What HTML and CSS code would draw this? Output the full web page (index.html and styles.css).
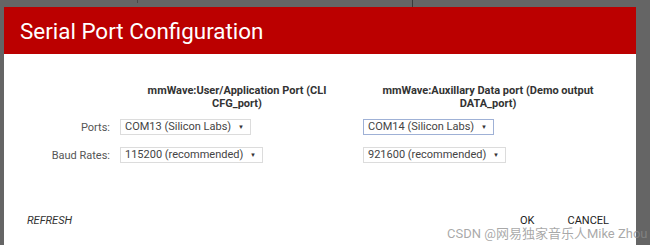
FILE: index.html
```html
<!DOCTYPE html>
<html>
<head>
<meta charset="utf-8">
<link rel="stylesheet" href="styles.css">
</head>
<body>
<div class="topstrip"><span class="mark mark-a"></span><span class="mark mark-b"></span></div>
<div class="dialog">
  <div class="header">Serial Port Configuration</div>
  <div class="grid">
    <div></div>
    <div class="heading h1">mmWave:User/Application Port (CLI CFG_port)</div>
    <div class="heading h2">mmWave:Auxillary Data port (Demo output DATA_port)</div>

    <div class="label">Ports:</div>
    <div class="cell"><span class="select">COM13 (Silicon Labs) <span class="arrow">▼</span></span></div>
    <div class="cell"><span class="select focused">COM14 (Silicon Labs) <span class="arrow">▼</span></span></div>

    <div class="label">Baud Rates:</div>
    <div class="cell"><span class="select">115200 (recommended) <span class="arrow">▼</span></span></div>
    <div class="cell"><span class="select">921600 (recommended) <span class="arrow">▼</span></span></div>
  </div>
  <div class="footer">
    <span class="refresh">REFRESH</span>
    <div class="actions"><span>OK</span><span>CANCEL</span></div>
  </div>
</div>
<div class="watermark">CSDN @网易独家音乐人Mike Zhou</div>
</body>
</html>
```

FILE: styles.css
```css
html, body {
  margin: 0;
  padding: 0;
}
body {
  width: 650px;
  height: 245px;
  overflow: hidden;
  background: #656565;
  font-family: Roboto, "Liberation Sans", sans-serif;
  position: relative;
}
.topstrip {
  height: 7px;
  display: flex;
}
.mark {
  width: 1px;
  height: 7px;
  background: #3a3a3a;
}
.mark-a {
  margin-left: 137px;
  height: 3px;
  background: #4a4a4a;
}
.mark-b {
  margin-left: 274px;
}
.dialog {
  margin-left: 4px;
  width: 632px;
  height: 238px;
  background: #fff;
  display: flex;
  flex-direction: column;
}
.header {
  height: 47px;
  box-sizing: border-box;
  background: #bb0000;
  color: #fff;
  font-size: 22.4px;
  padding: 11px 0 0 16px;
  line-height: 26px;
}
.grid {
  display: grid;
  grid-template-columns: 106px 233px 250px;
  column-gap: 10px;
  row-gap: 12px;
  padding-top: 30px;
  align-items: center;
}
.heading {
  font-size: 11px;
  font-weight: bold;
  color: #333;
  line-height: 13px;
  text-align: center;
  margin-bottom: -3px;
}
.h1 {
  width: 230px;
  margin-left: 2px;
}
.h2 {
  width: 250px;
}
.label {
  font-size: 11px;
  color: #555;
  text-align: right;
}
.cell {
  display: flex;
}
.select {
  display: inline-flex;
  align-items: center;
  height: 16px;
  box-sizing: border-box;
  border: 1px solid #dcdcdc;
  padding: 0 6px 0 4px;
  font-size: 11px;
  color: #444;
  line-height: 14px;
  white-space: pre;
}
.select.focused {
  border-color: #9fb1d6;
}
.arrow {
  font-size: 6px;
  margin-left: 4px;
  color: #333;
}
.footer {
  margin-top: auto;
  display: flex;
  justify-content: space-between;
  padding: 0 27px 18px 23px;
  font-size: 11px;
  line-height: 12px;
  color: #222;
}
.refresh {
  font-style: italic;
  color: #333;
}
.actions {
  display: flex;
  gap: 33px;
}
.watermark {
  position: absolute;
  left: 447px;
  top: 227px;
  font-family: Roboto, "Noto Sans CJK SC", sans-serif;
  font-size: 13px;
  line-height: 13px;
  color: rgba(140, 140, 140, 0.75);
  white-space: nowrap;
}
```
